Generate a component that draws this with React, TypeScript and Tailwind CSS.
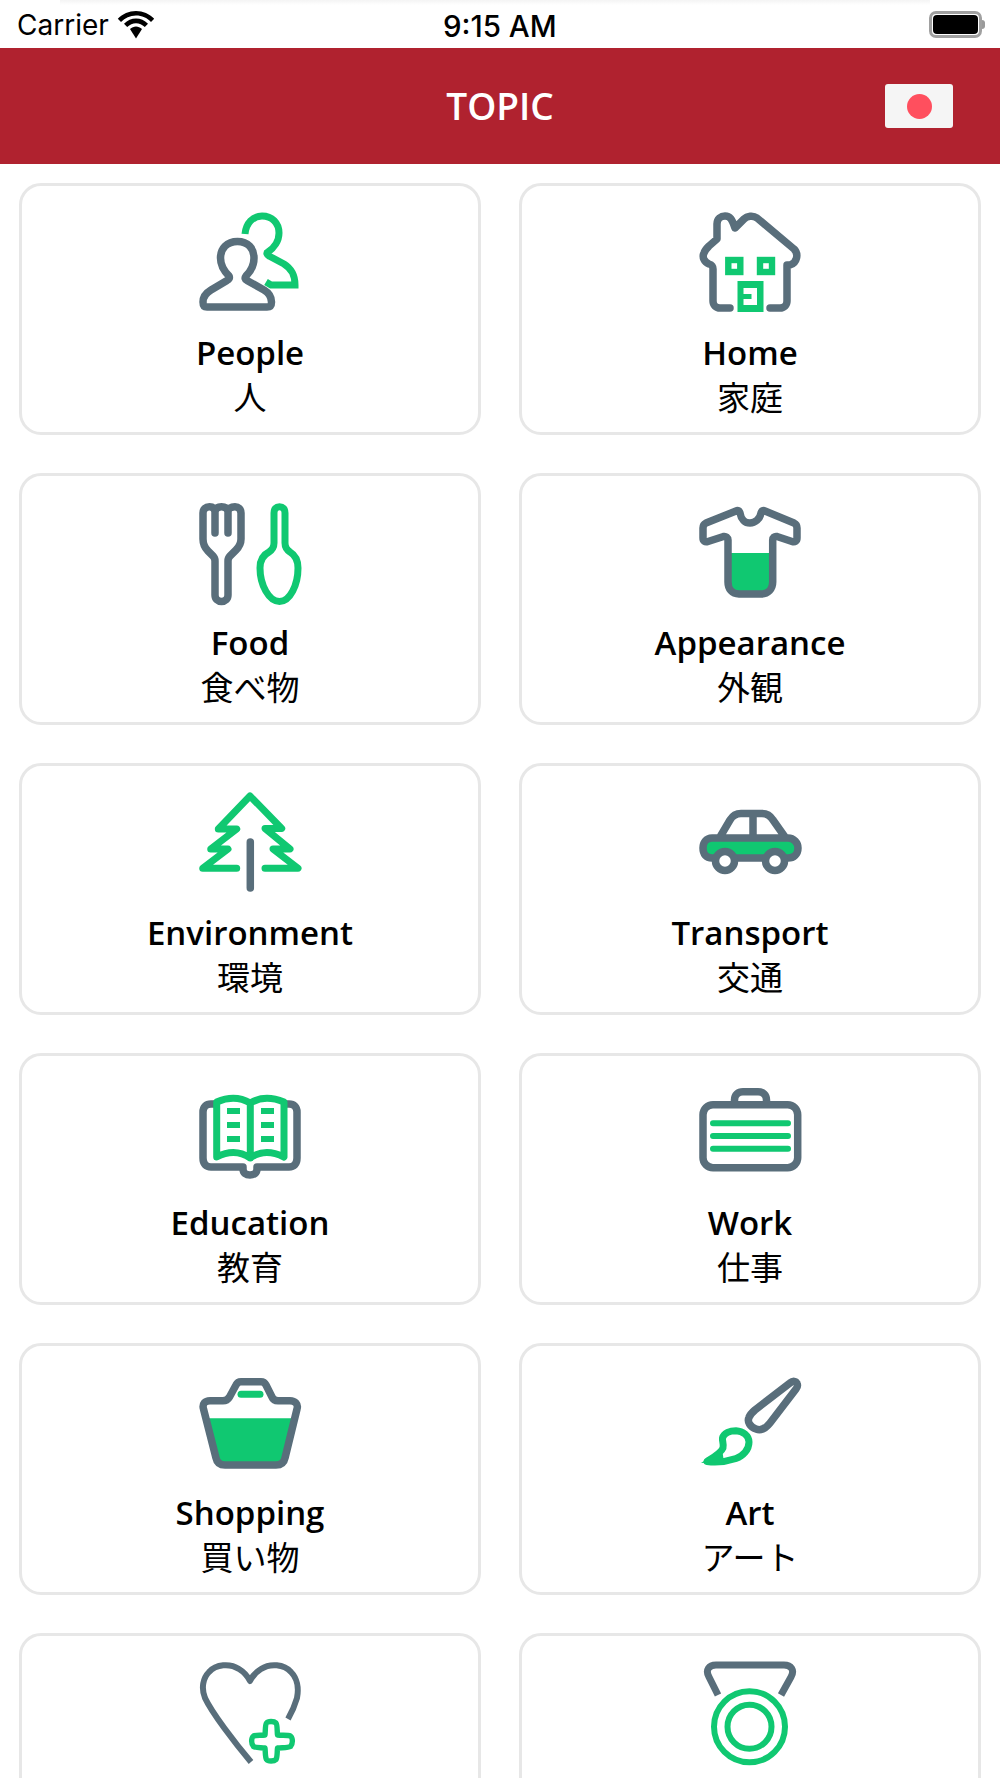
import React from "react";

const G = "#10c871";
const S = "#596e7b";
const gr = { stroke: S, strokeWidth: 7.5 };

function Ic({ children }: { children: React.ReactNode }) {
  return (
    <svg viewBox="0 0 100 100" className="w-[100px] h-[100px] block overflow-visible" fill="none" strokeWidth={7} strokeLinecap="round" strokeLinejoin="round">
      {children}
    </svg>
  );
}

const People = () => (
  <Ic>
    <path stroke={G} strokeLinecap="butt" strokeLinejoin="miter" d="M45 21 C46 10 53 3 62 3 C72 3 79 10 79 20 C79 28 74 35 68 39 C66 40 67 42 69 43 L84 51 C92 56 95 62 95 72 H71 L66 69" />
    <path {...gr} d="M37.5 28.5 C27 28.5 20.5 35.5 20.5 45 C20.5 52 24 58 29 63 C30 65 29 66.5 27 67.5 L11 77 C6 80 3 84 3 89 C3 92.5 4.5 94 7 94 H67 C70 94 71.5 92.5 71.5 89 C71.5 84 69 80 64 77 L47 67.5 C45 66.5 44.5 65 46 63 C51 58 54 52 54 45 C54 35.5 48 28.5 37.5 28.5 Z" />
  </Ic>
);

const Home = () => (
  <Ic>
    <path {...gr} d="M30 95 H20 C16 95 13 92 13 88 V56 C13 53 12 52 9 51 C4 49 2 44 4 40 C5 37 7 35 9 33 L17 26 V11 C17 6 21 3 25 3 C30 3 32 6 35 15 L44 6 C47 3 53 2 57 5 L94 36 C99 41 97 50 90 52 H87 V88 C87 92 84 95 80 95 H70" />
    <rect x="28.3" y="47" width="12" height="12" stroke={G} strokeWidth={6.4} strokeLinejoin="miter" />
    <rect x="60" y="47" width="12" height="12" stroke={G} strokeWidth={6.4} strokeLinejoin="miter" />
    <path fill={G} fillRule="evenodd" d="M37.5 68 H63.5 V99 H37.5 Z M43.5 75 V81 H51.5 V86 H43.5 V92 H57 V75 Z" />
  </Ic>
);

const Food = () => (
  <Ic>
    <path {...gr} d="M15 30 V9 C15 5.5 13 3.7 9.5 3.7 C5.5 3.7 3 6 3 10 V36 C3 41 5 45 8 48 L13 53 C14.5 54.5 15 55.5 15 58 V92 C15 96 18 98.5 21.5 98.5 C25 98.5 28 96 28 92 V58 C28 55.5 28.5 54.5 30 53 L36 47 C39 44 41 41 41 36 V10 C41 6 38.5 3.7 35 3.7 C31 3.7 28 5.5 28 9 V30 M15 9 C15 5 18 3.7 21.5 3.7 C25 3.7 28 5 28 9" />
    <path stroke={G} d="M79.5 3.7 C76 3.7 74 6 74 10 V40 C74 44 72 47 69 49 C63 52 60 57 60 65 C60 82 69 98.5 79.5 98.5 C90 98.5 98 82 98 65 C98 57 95 52 90 49 C87 47 85 44 85 40 V10 C85 6 83 3.7 79.5 3.7 Z" />
  </Ic>
);

const Shirt = () => (
  <Ic>
    <path fill={G} d="M31 50 H70 V88 H31 Z" />
    <path {...gr} d="M36 8 C38 7 39.5 8 40 10 C41 16 45 20 50 20 C55 20 60 16 61 10 C61.5 8 63 7 65 8 L94 20 C96 21 97 22.5 97 25 V35 C97 38 95 39.5 92 38.5 L77 33.5 C74.5 33 72.7 34.5 72.7 37 V79 C72.7 86 68 91 61 91 H39 C32 91 28 86 28 79 V37 C28 34.5 26 33 23.5 33.5 L8 38.5 C5 39.5 3 38 3 35 V25 C3 22.5 4 21 6 20 Z" />
  </Ic>
);

const Tree = () => (
  <Ic>
    <path stroke={G} d="M36.7 75.3 H2.7 L28 56 H10.7 L36.7 36 H18.3 L50 3 L81.7 35.5 H65 L90 56 H73 L98 75.3 H65" />
    <path stroke={S} strokeWidth={7.5} d="M50.3 49 V95" />
  </Ic>
);

const Car = () => (
  <Ic>
    <path fill={G} d="M12 47 H88 C93 47 96 50 96 55 C96 60 93 63 88 63 H12 C7 63 4 60 4 55 C4 50 7 47 12 47 Z" />
    <path {...gr} d="M20 44 L30 27 C33 22 36 20.5 41 20.5 H62 C67 20.5 70 22 73 27 L85 44 M53 20.5 V44 M12 45 H88 C94 45 98 50 98 55 C98 61 94 65 88 65 H12 C6 65 3 61 3 55 C3 50 6 45 12 45 Z" />
    <circle cx="25" cy="68" r="9.5" fill="#fff" {...gr} />
    <circle cx="75" cy="68" r="9.5" fill="#fff" {...gr} />
  </Ic>
);

const Book = () => (
  <Ic>
    <path {...gr} d="M14 21 H11 C6 21 3 24 3 29 V75 C3 81 6 84 11 84 H43 V86 C43 90 46 92 50 92 C54 92 57 90 57 86 V84 H89 C94 84 97 81 97 75 V29 C97 24 94 21 89 21 H86" />
    <path fill="#fff" d="M17 19 C28 14 40 14 50 20 C60 14 72 14 84 19 V74 C72 68 60 68 50 75 C40 68 28 68 17 74 Z" />
    <path stroke={G} d="M50.3 20 C40 14 28 14 16.7 19 V74 C28 68 40 68 50.3 75 C60 68 72 68 84 74 V19 C72 14 60 14 50.3 20 Z M50.3 20 V75" />
    <path fill={G} d="M27 25 H40 V31 H27 Z M27 39 H40 V45 H27 Z M27 53 H40 V59 H27 Z M61 25 H74 V31 H61 Z M61 39 H74 V45 H61 Z M61 53 H74 V59 H61 Z" />
  </Ic>
);

const Work = () => (
  <Ic>
    <path {...gr} d="M34.5 21 V17 C34.5 12 38 8.7 43 8.7 H58 C63 8.7 66.5 12 66.5 17 V21" strokeLinecap="butt" />
    <rect x="3" y="21.7" width="94.7" height="63" rx="10" {...gr} />
    <path stroke={G} strokeWidth={6} d="M13 40.3 H88 M13 53 H88 M13 65.7 H88" />
  </Ic>
);

const Bag = () => (
  <Ic>
    <path fill={G} d="M9 45.3 H91.7 L82 89 H19 Z" />
    <path {...gr} d="M36 12 C37 10 38.5 8.7 41 8.7 H61 C63.5 8.7 65 10 66 12 L72 24 C73 26.5 75 27.7 78 27.7 H90 C95 27.7 98.5 31 97 36 L85 85 C84 90 81 92 76 92 H25 C20 92 17 90 16 85 L3.5 36 C2 31 5 27.7 10 27.7 H23 C26 27.7 28 26.5 29.5 24 Z" />
    <path stroke={G} d="M41 21.3 H60" />
  </Ic>
);

const Brush = () => (
  <Ic>
    <path {...gr} d="M90 10 C93 7.5 96 8 97 10.5 C98 12.5 97.5 14 96 16 L70 50 C66 55 61 58 56 56 C50 54 47 48.5 49 44.5 C50 41.5 52 39.5 55 37 Z" />
    <path stroke={G} strokeLinejoin="round" d="M7 88.5 C14 84 21 80 23 75 C24 71 22 68 22.5 65 C24 60 30 57.7 36 57.7 C43 58 49 63 49 69 C49 77 43 83 36 85.5 C27 88.5 15 89.5 7 88.5 Z" />
    <path fill={G} d="M1 90 L22 76 L24 89 Z" />
  </Ic>
);

const Heart = () => (
  <Ic>
    <path stroke={S} strokeWidth={6} strokeLinecap="butt" d="M51 99 C35 80 12 50 5 35 C1 25 3 15 9 9 C16 1 30 0 39 6 C44 9 47 12 50 18 C53 12 56 9 61 6 C70 0 84 1 91 9 C97 15 99 25 97 35 C95 42 92 49 88 56" />
    <path stroke={G} strokeWidth={5.4} d="M66.5 60 C68 58 74 58 76 60 C77.5 62 77 68 77.5 72 C82 72.5 88 72 90.5 73 C93 75 93 81 90.5 83.5 C88 85 82 84.5 77.5 85 C77 89 77.5 94 76 96.5 C74 98.5 68 98.5 66.5 96.5 C65 94 65.5 89 65 85 C61 84.5 55.5 85 53.5 83.5 C51 81 51 75 53.5 73 C55.5 72 61 72.5 65 72 C65.5 68 65 62 66.5 60 Z" />
  </Ic>
);

const Medal = () => (
  <Ic>
    <path stroke={S} strokeWidth={7} strokeLinecap="butt" d="M18 32 L9 14 C5 7 9 2 16 2 H84 C91 2 95 7 91 14 L81 32" />
    <circle cx="49.5" cy="63.7" r="35.5" stroke={G} strokeWidth={6} />
    <circle cx="49.5" cy="63.7" r="22" stroke={G} strokeWidth={6} />
  </Ic>
);

function Card({ icon, en, ja }: { icon: React.ReactNode; en?: string; ja?: string }) {
  return (
    <div className="h-[252px] rounded-[22px] border-[3px] border-[#e7e7e7] bg-white flex flex-col items-center pt-[27px]">
      {icon}
      {en && (
        <div className="mt-[18px] text-[33px] leading-[44px] font-semibold text-black font-['Open_Sans',sans-serif]">{en}</div>
      )}
      {ja && (
        <div className="-mt-[2px] text-[33px] leading-[46px] font-normal text-black font-['Noto_Sans_CJK_JP',sans-serif]">{ja}</div>
      )}
    </div>
  );
}

export default function App() {
  return (
    <div className="w-[1000px] h-[1778px] overflow-hidden bg-white relative">
      <div className="absolute left-[60px] top-0 w-[870px] h-[5px] bg-gradient-to-b from-[#f4f4f4] to-white" />
      <div className="h-12 flex items-center justify-between relative pl-[17px] pr-[15px] pt-[1px] font-['Inter',sans-serif] text-black">
        <div className="flex items-center gap-[8px]">
          <span className="text-[28px] leading-none">Carrier</span>
          <svg width="38" height="28" viewBox="0 0 38 28" fill="#000">
            <path d="M19 0 C12 0 5.5 3 0.8 7.8 L4 11 C8 7 13 4.6 19 4.6 C25 4.6 30 7 34 11 L37.2 7.8 C32.5 3 26 0 19 0 Z" />
            <path d="M19 7.5 C14.5 7.5 10.5 9.3 7 12.8 L10.2 16 C12.8 13.8 15.7 12.3 19 12.3 C22.3 12.3 25.2 13.8 27.8 16 L31 12.8 C27.5 9.3 23.5 7.5 19 7.5 Z" />
            <path d="M19 15.5 C17 15.5 14.7 16.4 13 18 L19 27.5 L25 18 C23.3 16.4 21 15.5 19 15.5 Z" />
          </svg>
        </div>
        <span className="absolute left-[443px] top-[11px] text-[29.5px] leading-[30px] font-medium">9:15 AM</span>
        <div className="flex items-center">
          <div className="w-[53px] h-[27px] rounded-[7px] border-[3px] border-[#a0a0a0] p-[1px]">
            <div className="w-full h-full rounded-[4px] bg-black" />
          </div>
          <div className="w-[3px] h-[9px] bg-[#9a9a9a] rounded-r-sm" />
        </div>
      </div>
      <div className="h-[116px] bg-[#b0222f] flex items-center justify-center relative">
        <span className="text-white text-[37px] font-semibold font-['Open_Sans',sans-serif]">TOPIC</span>
        <div className="absolute left-[885px] top-[36px] w-[68px] h-[44px] rounded-[3px] bg-[#f5f5f5] flex items-center justify-center">
          <div className="w-[25px] h-[25px] rounded-full bg-[#ff4f5e]" />
        </div>
      </div>
      <div className="grid grid-cols-2 gap-x-[38px] gap-y-[38px] px-[19px] pt-[19px]">
        <Card icon={<People />} en="People" ja="人" />
        <Card icon={<Home />} en="Home" ja="家庭" />
        <Card icon={<Food />} en="Food" ja="食べ物" />
        <Card icon={<Shirt />} en="Appearance" ja="外観" />
        <Card icon={<Tree />} en="Environment" ja="環境" />
        <Card icon={<Car />} en="Transport" ja="交通" />
        <Card icon={<Book />} en="Education" ja="教育" />
        <Card icon={<Work />} en="Work" ja="仕事" />
        <Card icon={<Bag />} en="Shopping" ja="買い物" />
        <Card icon={<Brush />} en="Art" ja="アート" />
        <Card icon={<Heart />} />
        <Card icon={<Medal />} />
      </div>
    </div>
  );
}
